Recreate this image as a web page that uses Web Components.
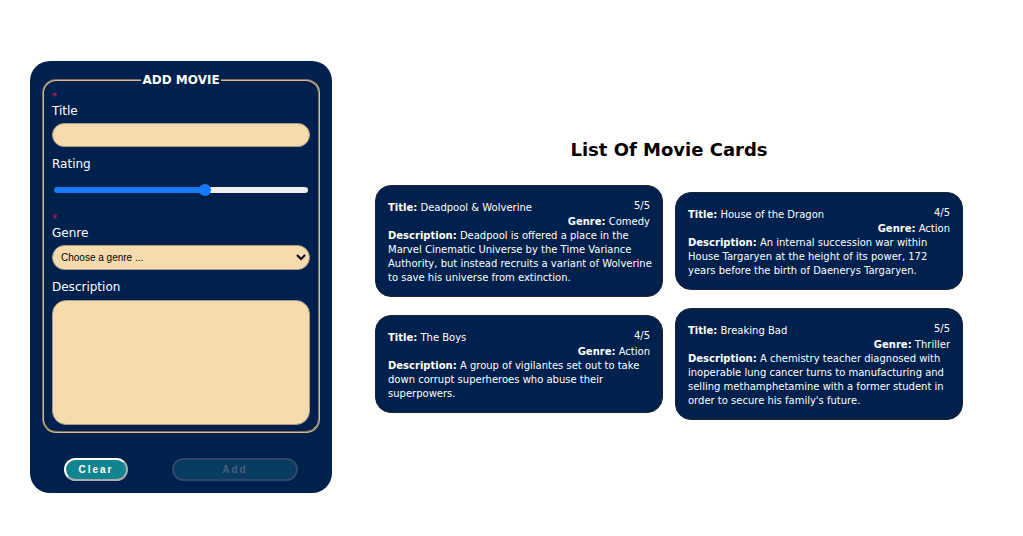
<!DOCTYPE html>
<html lang="en">
<head>
<meta charset="utf-8">
<meta name="viewport" content="width=device-width, initial-scale=1">
<title>Movie Cards</title>
<style>
  body {
    margin: 0;
    background: #fff;
    font-family: Verdana, "DejaVu Sans", sans-serif;
    --navy: #00214d;
    --sand: #f4daad;
    --teal: #128390;
  }
</style>
</head>
<body>
<movie-app></movie-app>

<template id="app-template">
  <style>
    :host {
      display: grid;
      grid-template-columns: 302px minmax(0, 1fr);
      gap: 43px;
      align-items: center;
      box-sizing: border-box;
      min-height: 100vh;
      padding: 18px 60px 0 30px;
    }
    @media (max-width: 760px) {
      :host { grid-template-columns: minmax(0, 1fr); padding: 20px; }
    }
  </style>
  <movie-form></movie-form>
  <movie-list>
    <movie-card rating="5/5">
      <span slot="title">Deadpool &amp; Wolverine</span>
      <span slot="genre">Comedy</span>
      Deadpool is offered a place in the Marvel Cinematic Universe by the Time Variance Authority, but instead recruits a variant of Wolverine to save his universe from extinction.
    </movie-card>
    <movie-card rating="4/5">
      <span slot="title">House of the Dragon</span>
      <span slot="genre">Action</span>
      An internal succession war within House Targaryen at the height of its power, 172 years before the birth of Daenerys Targaryen.
    </movie-card>
    <movie-card rating="4/5">
      <span slot="title">The Boys</span>
      <span slot="genre">Action</span>
      A group of vigilantes set out to take down corrupt superheroes who abuse their superpowers.
    </movie-card>
    <movie-card rating="5/5">
      <span slot="title">Breaking Bad</span>
      <span slot="genre">Thriller</span>
      A chemistry teacher diagnosed with inoperable lung cancer turns to manufacturing and selling methamphetamine with a former student in order to secure his family's future.
    </movie-card>
  </movie-list>
</template>

<template id="form-template">
  <style>
    :host {
      display: block;
      box-sizing: border-box;
      padding: 12px;
      border-radius: 20px;
      background: var(--navy);
      color: #fff;
      font-size: 12px;
      line-height: 14px;
    }
    form { margin: 0; }
    fieldset {
      margin: 0;
      padding: 3px 8px 6px;
      min-width: 0;
      border: 2px groove #d2bc94;
      border-radius: 14px;
    }
    legend { margin: 0 auto; padding: 0 1px; font-weight: bold; }
    .field { display: flex; flex-direction: column; margin-bottom: 10px; }
    .field:last-child { margin-bottom: 0; }
    .required { color: #e0112b; font-size: 10px; }
    input, select, textarea {
      box-sizing: border-box;
      width: 100%;
      margin: 5px 0 0;
      border: 1px solid #a79c88;
      border-radius: 14px;
      background: var(--sand);
      color: #000;
      font: 10px "Liberation Sans", Arial, sans-serif;
    }
    input { height: 24px; padding: 0 8px; }
    select { height: 25px; padding: 0 0 0 4px; }
    textarea { display: block; height: 125px; margin-top: 6px; padding: 8px; resize: none; }
    input[type="range"] {
      appearance: none;
      width: auto;
      height: 12px;
      margin: 13px 2px 6px;
      padding: 0;
      border: 0;
      background: none;
    }
    input[type="range"]::-webkit-slider-runnable-track {
      height: 6px;
      border-radius: 3px;
      background: linear-gradient(to right, #167aff var(--fill, 60%), #efefef var(--fill, 60%));
    }
    input[type="range"]::-webkit-slider-thumb {
      appearance: none;
      width: 12px;
      height: 12px;
      margin-top: -3px;
      border-radius: 50%;
      background: #167aff;
    }
    .actions {
      display: grid;
      grid-template-columns: 64px 126px;
      justify-content: space-between;
      padding: 25px 22px 0;
    }
    button {
      height: 23px;
      padding: 0;
      border: 2px outset #fff;
      border-radius: 12px;
      background: var(--teal);
      color: #fff;
      font: bold 10px "Liberation Sans", Arial, sans-serif;
      letter-spacing: 2px;
    }
    button:disabled { background: #083c60; border: 2px solid #304769; color: #4c5c7e; }
  </style>
  <form>
    <fieldset>
      <legend>ADD MOVIE</legend>
      <div class="field">
        <span class="required">*</span>
        <label for="title">Title</label>
        <input id="title" type="text" required>
      </div>
      <div class="field">
        <label for="rating">Rating</label>
        <input id="rating" type="range" min="0" max="5" value="3">
      </div>
      <div class="field">
        <span class="required">*</span>
        <label for="genre">Genre</label>
        <select id="genre" required>
          <option value="">Choose a genre ...</option>
          <option>Action</option>
          <option>Comedy</option>
          <option>Thriller</option>
        </select>
      </div>
      <div class="field">
        <label for="description">Description</label>
        <textarea id="description"></textarea>
      </div>
    </fieldset>
    <div class="actions">
      <button type="reset">Clear</button>
      <button type="submit" disabled>Add</button>
    </div>
  </form>
</template>

<template id="list-template">
  <style>
    :host { display: block; }
    h2 { margin: 0 0 19px; font-size: 18px; line-height: 32px; text-align: center; color: #000; }
    .cards {
      display: grid;
      grid-template-columns: repeat(auto-fit, minmax(240px, 1fr));
      gap: 11px 12px;
      align-items: center;
    }
  </style>
  <h2>List Of Movie Cards</h2>
  <div class="cards"><slot></slot></div>
</template>

<template id="card-template">
  <style>
    :host {
      display: block;
      box-sizing: border-box;
      padding: 13px 8px 11px 12px;
      border: 1px solid #1b2430;
      border-radius: 16px;
      background: var(--navy);
      color: #fff;
      font-size: 10px;
      line-height: 14px;
    }
    header { display: flex; justify-content: space-between; gap: 8px; height: 16px; }
    p { margin: 0; }
    .title { align-self: flex-end; }
    .rating, .genre { padding-right: 4px; text-align: right; }
  </style>
  <header>
    <p class="title"><b>Title:</b> <slot name="title"></slot></p>
    <p class="rating"></p>
  </header>
  <p class="genre"><b>Genre:</b> <slot name="genre"></slot></p>
  <p><b>Description:</b> <slot></slot></p>
</template>

<script>
  class TemplateElement extends HTMLElement {
    constructor() {
      super();
      const template = document.getElementById(this.constructor.template);
      this.attachShadow({ mode: "open" }).append(template.content.cloneNode(true));
    }
  }

  class MovieCard extends TemplateElement {
    static template = "card-template";
    connectedCallback() {
      this.shadowRoot.querySelector(".rating").textContent = this.getAttribute("rating");
    }
  }

  class MovieList extends TemplateElement {
    static template = "list-template";
  }

  class MovieForm extends TemplateElement {
    static template = "form-template";
    connectedCallback() {
      const form = this.shadowRoot.querySelector("form");
      const submit = form.querySelector("[type=submit]");
      const range = form.querySelector("[type=range]");
      const paintTrack = () => range.style.setProperty("--fill", `${(range.value / range.max) * 100}%`);
      form.addEventListener("input", () => {
        submit.disabled = !form.checkValidity();
        paintTrack();
      });
      form.addEventListener("reset", () => {
        submit.disabled = true;
        requestAnimationFrame(paintTrack);
      });
      form.addEventListener("submit", (event) => event.preventDefault());
    }
  }

  class MovieApp extends TemplateElement {
    static template = "app-template";
  }

  customElements.define("movie-card", MovieCard);
  customElements.define("movie-list", MovieList);
  customElements.define("movie-form", MovieForm);
  customElements.define("movie-app", MovieApp);
</script>
</body>
</html>
